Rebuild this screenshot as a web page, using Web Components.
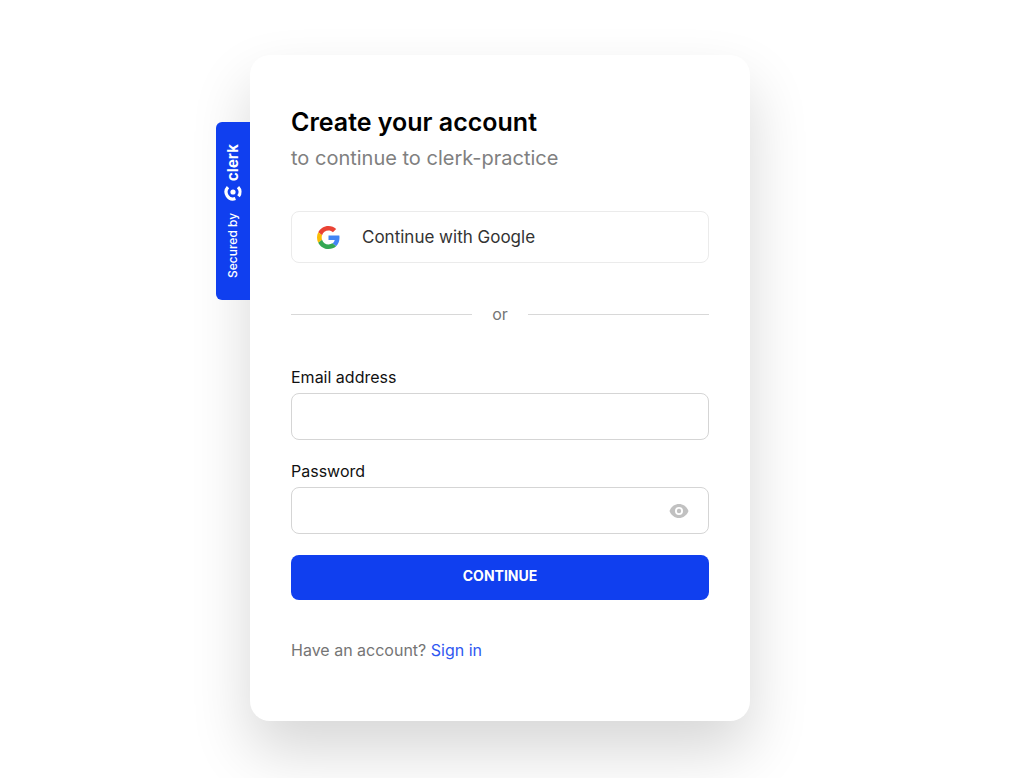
<!DOCTYPE html>
<html lang="en">
<head>
<meta charset="utf-8">
<meta name="viewport" content="width=device-width, initial-scale=1">
<title>Create your account</title>
<style>
  body { margin: 0; background: #fff; font-family: Inter, "Liberation Sans", sans-serif; color: #000; }
</style>
</head>
<body>
<sign-up-page></sign-up-page>

<template id="page-template">
  <style>
    :host { display: flex; justify-content: center; padding: 55px 12px 57px 0; overflow: hidden; }
  </style>
  <auth-card>
    <secured-badge slot="badge"></secured-badge>
    <card-header heading="Create your account" subtitle="to continue to clerk-practice"></card-header>
    <google-button>Continue with Google</google-button>
    <or-divider>or</or-divider>
    <sign-up-form></sign-up-form>
    <card-footer></card-footer>
  </auth-card>
</template>

<template id="card-template">
  <style>
    :host {
      display: block; position: relative; box-sizing: border-box; width: 100%; max-width: 500px;
      padding: 52px 41px 61px; border-radius: 20px; background: #fff;
      box-shadow: 0 30px 60px rgba(0, 0, 0, 0.16);
    }
    main { display: flex; flex-direction: column; }
    .badge { position: absolute; right: 100%; top: 67px; }
  </style>
  <div class="badge"><slot name="badge"></slot></div>
  <main><slot></slot></main>
</template>

<template id="badge-template">
  <style>
    :host { display: block; }
    a {
      display: flex; align-items: center; justify-content: center; gap: 12px;
      box-sizing: border-box; width: 34px; height: 178px;
      writing-mode: vertical-rl; transform: rotate(180deg);
      border-radius: 0 6px 6px 0; background: #103fef; color: #fff;
      font-size: 12px; line-height: 20px; font-weight: 500; text-decoration: none;
    }
    .brand { display: flex; align-items: center; gap: 2px; font-size: 15px; font-weight: 700; }
    svg { display: block; width: 18px; height: 18px; transform: rotate(90deg); }
  </style>
  <a href="#clerk">
    <span>Secured by</span>
    <span class="brand">
      <svg viewBox="0 0 18 18" aria-hidden="true" fill="none" stroke="#fff">
        <path d="M13.800 4A7 7 0 0 0 2.400 11.400" stroke-width="3.200"/>
        <path d="M4.700 14.500A7 7 0 0 0 13.900 14" stroke-width="3.200"/>
        <circle cx="9" cy="9" r="2.600" fill="#fff" stroke="none"/>
      </svg>
      <span>clerk</span>
    </span>
  </a>
</template>

<template id="header-template">
  <style>
    :host { display: block; margin-bottom: 39px; }
    h1 { margin: 0 0 7px; font-size: 25px; line-height: 30px; font-weight: 600; }
    p { margin: 0; font-size: 20px; line-height: 28px; font-weight: 400; color: #808080; }
  </style>
  <h1></h1>
  <p></p>
</template>

<template id="google-template">
  <style>
    :host { display: block; }
    button {
      display: flex; align-items: center; gap: 22px; width: 100%; height: 52px; padding: 0 25px;
      border: 1px solid #ebebeb; border-radius: 8px; background: #fff; color: #333;
      font: inherit; font-size: 17px; line-height: 24px; cursor: pointer;
    }
    svg { display: block; width: 23px; height: 23px; }
  </style>
  <button type="button">
    <svg viewBox="0 0 48 48" aria-hidden="true">
      <path fill="#EA4335" d="M24 9.5c3.54 0 6.71 1.22 9.21 3.6l6.85-6.85C35.9 2.38 30.47 0 24 0 14.62 0 6.51 5.38 2.56 13.22l7.98 6.19C12.43 13.72 17.74 9.5 24 9.5z"/>
      <path fill="#4285F4" d="M46.98 24.55c0-1.57-.15-3.09-.38-4.55H24v9.02h12.94c-.58 2.96-2.26 5.48-4.78 7.18l7.73 6c4.51-4.18 7.09-10.36 7.09-17.65z"/>
      <path fill="#FBBC05" d="M10.53 28.59c-.48-1.45-.76-2.99-.76-4.59s.27-3.14.76-4.59l-7.98-6.19C.92 16.46 0 20.12 0 24s.92 7.54 2.56 10.78l7.97-6.19z"/>
      <path fill="#34A853" d="M24 48c6.48 0 11.93-2.13 15.89-5.81l-7.73-6c-2.15 1.45-4.92 2.3-8.16 2.3-6.26 0-11.57-4.22-13.47-9.91l-7.98 6.19C6.51 42.62 14.62 48 24 48z"/>
    </svg>
    <span><slot></slot></span>
  </button>
</template>

<template id="divider-template">
  <style>
    :host {
      display: flex; align-items: center; gap: 20px; margin: 39px 0 41px;
      font-size: 16px; line-height: 24px; color: #757575;
    }
    i { flex: 1; height: 1px; background: #d8d8d8; }
  </style>
  <i></i><span><slot></slot></span><i></i>
</template>

<template id="form-template">
  <style>
    :host { display: block; }
    form { display: flex; flex-direction: column; gap: 21px; }
    .submit {
      width: 100%; height: 45px; padding: 0 0 3px; border: 0; border-radius: 8px;
      background: #103fef; color: #fff; font: inherit; font-size: 14px; line-height: 20px;
      font-weight: 700; text-transform: uppercase; cursor: pointer;
    }
  </style>
  <form>
    <text-field label="Email address" type="email"></text-field>
    <text-field label="Password" type="password"></text-field>
    <button class="submit" type="button">Continue</button>
  </form>
</template>

<template id="field-template">
  <style>
    :host { display: flex; flex-direction: column; gap: 6px; }
    label { font-size: 16px; line-height: 20px; color: #111; }
    .box {
      display: flex; align-items: center; box-sizing: border-box; height: 47px;
      border: 1px solid #d5d5d5; border-radius: 8px; background: #fff;
    }
    .box:focus-within { border-color: #103fef; }
    input {
      flex: 1; min-width: 0; height: 100%; box-sizing: border-box; padding: 0 20px;
      border: 0; outline: 0; background: transparent; font: inherit; font-size: 16px;
    }
    button {
      display: flex; margin-right: 19px; padding: 0; border: 0; background: none;
      color: #c1c1c1; cursor: pointer;
    }
    button[hidden] { display: none; }
    svg { width: 20px; height: 20px; }
  </style>
  <label for="field"></label>
  <div class="box">
    <input id="field">
    <button type="button" aria-label="Show password" hidden>
      <svg viewBox="0 0 20 20" aria-hidden="true">
        <path fill="currentColor" fill-rule="evenodd" d="M10 3C5.8 3 2 5.7.5 10 2 14.3 5.8 17 10 17s8-2.7 9.5-7C18 5.7 14.2 3 10 3zM10 6a4 4 0 1 1 0 8 4 4 0 0 1 0-8z"/>
        <circle cx="10" cy="10" r="2.2" fill="currentColor"/>
      </svg>
    </button>
  </div>
</template>

<template id="footer-template">
  <style>
    :host { display: block; margin-top: 40px; font-size: 16px; line-height: 20px; color: #757575; }
    a { color: #2f58f1; text-decoration: none; }
  </style>
  <span>Have an account?</span> <a href="#sign-in">Sign in</a>
</template>

<script>
  class TemplateElement extends HTMLElement {
    constructor() {
      super();
      const template = document.getElementById(this.constructor.template);
      this.attachShadow({ mode: "open" }).append(template.content.cloneNode(true));
    }
  }

  class CardHeader extends TemplateElement {
    static template = "header-template";
    connectedCallback() {
      this.shadowRoot.querySelector("h1").textContent = this.getAttribute("heading");
      this.shadowRoot.querySelector("p").textContent = this.getAttribute("subtitle");
    }
  }

  class TextField extends TemplateElement {
    static template = "field-template";
    connectedCallback() {
      const type = this.getAttribute("type");
      const input = this.shadowRoot.querySelector("input");
      const toggle = this.shadowRoot.querySelector("button");
      this.shadowRoot.querySelector("label").textContent = this.getAttribute("label");
      input.type = type;
      toggle.hidden = type !== "password";
      toggle.onclick = () => { input.type = input.type === "password" ? "text" : "password"; };
    }
  }

  customElements.define("auth-card", class extends TemplateElement { static template = "card-template"; });
  customElements.define("secured-badge", class extends TemplateElement { static template = "badge-template"; });
  customElements.define("card-header", CardHeader);
  customElements.define("google-button", class extends TemplateElement { static template = "google-template"; });
  customElements.define("or-divider", class extends TemplateElement { static template = "divider-template"; });
  customElements.define("text-field", TextField);
  customElements.define("sign-up-form", class extends TemplateElement { static template = "form-template"; });
  customElements.define("card-footer", class extends TemplateElement { static template = "footer-template"; });
  customElements.define("sign-up-page", class extends TemplateElement { static template = "page-template"; });
</script>
</body>
</html>
